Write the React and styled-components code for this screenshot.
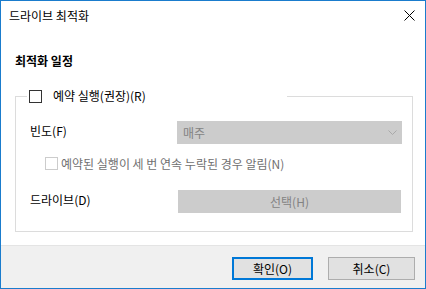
import React from 'react';
import styled, { createGlobalStyle } from 'styled-components';

const GlobalStyle = createGlobalStyle`
  html, body {
    margin: 0;
    padding: 0;
    background: #ffffff;
  }
  body {
    font-family: "Noto Sans CJK KR", "Noto Sans", "Liberation Sans", sans-serif;
    font-size: 12px;
    color: #000000;
  }
`;

const Window = styled.div`
  width: 426px;
  height: 289px;
  box-sizing: border-box;
  border: 1px solid #1a7ccd;
  background: #ffffff;
  display: flex;
  flex-direction: column;
  overflow: hidden;
`;

const TitleBar = styled.div`
  height: 29px;
  display: flex;
  align-items: center;
  justify-content: space-between;
  padding: 0 10px 0 8px;
  font-size: 12px;
  line-height: 16px;
`;

const CloseButton = styled.div`
  width: 12px;
  height: 12px;
  display: flex;
  align-items: center;
  justify-content: center;
`;

const Body = styled.div`
  flex: 1;
  padding: 0 12px 0 14px;
`;

const Heading = styled.div`
  margin-top: 23px;
  font-weight: bold;
  line-height: 16px;
`;

const Group = styled.fieldset`
  margin: 19px 0 0 0;
  padding: 17px 10px 18px 14px;
  border: 1px solid #dcdcdc;
  min-width: 0;
`;

const Legend = styled.legend`
  box-sizing: border-box;
  width: 260px;
  margin-left: -3px;
  padding: 0 2px;
  display: flex;
  align-items: center;
  gap: 11px;
  line-height: 16px;
`;

const Box = styled.span`
  display: inline-block;
  box-sizing: border-box;
  width: 13px;
  height: 13px;
  border: 1px solid ${p => (p.$disabled ? '#cccccc' : '#333333')};
  background: #ffffff;
  flex: none;
`;

const Row = styled.div`
  display: flex;
  align-items: center;
  height: 23px;
  margin-top: ${p => p.$top || 0}px;
`;

const Label = styled.span`
  width: ${p => p.$width}px;
  line-height: 16px;
  margin-top: -3px;
  flex: none;
`;

const Select = styled.div`
  box-sizing: border-box;
  width: 225px;
  height: 23px;
  background: #cccccc;
  color: #838383;
  display: flex;
  align-items: center;
  justify-content: space-between;
  padding: 0 5px 0 6px;
  line-height: 16px;
`;

const CheckRow = styled.div`
  display: flex;
  align-items: center;
  gap: 3px;
  margin: 13px 0 0 15px;
  height: 13px;
  color: #707070;
  line-height: 16px;
`;

const DisabledButton = styled.div`
  width: 223px;
  height: 23px;
  margin-left: 1px;
  background: #cccccc;
  color: #838383;
  display: flex;
  align-items: center;
  justify-content: center;
  line-height: 16px;
`;

const Footer = styled.div`
  height: 43px;
  box-sizing: border-box;
  border-top: 1px solid #e4e4e4;
  background: #f0f0f0;
  display: flex;
  justify-content: flex-end;
  align-items: flex-start;
  gap: 15px;
  padding: 11px 10px 0 0;
`;

const Button = styled.div`
  box-sizing: border-box;
  width: ${p => p.$width}px;
  height: 23px;
  background: #e1e1e1;
  border: ${p => (p.$primary ? '2px solid #0078d7' : '1px solid #adadad')};
  display: flex;
  align-items: center;
  justify-content: center;
  line-height: 16px;
`;

export default function App() {
  return (
    <>
      <GlobalStyle />
      <Window>
        <TitleBar>
          <span>드라이브 최적화</span>
          <CloseButton>
            <svg width="11" height="11" viewBox="0 0 11 11">
              <path d="M0.5 0.5 L10.5 10.5 M10.5 0.5 L0.5 10.5" stroke="#000" strokeWidth="1" fill="none" />
            </svg>
          </CloseButton>
        </TitleBar>
        <Body>
          <Heading>최적화 일정</Heading>
          <Group>
            <Legend>
              <Box />
              <span>예약 실행(권장)(R)</span>
            </Legend>
            <Row>
              <Label $width={147}>빈도(F)</Label>
              <Select>
                <span>매주</span>
                <svg width="9" height="6" viewBox="0 0 9 6">
                  <path d="M0.5 0.5 L4.5 4.5 L8.5 0.5" stroke="#a9a9a9" strokeWidth="1" fill="none" />
                </svg>
              </Select>
            </Row>
            <CheckRow>
              <Box $disabled />
              <span>예약된 실행이 세 번 연속 누락된 경우 알림(N)</span>
            </CheckRow>
            <Row $top={20}>
              <Label $width={147}>드라이브(D)</Label>
              <DisabledButton>선택(H)</DisabledButton>
            </Row>
          </Group>
        </Body>
        <Footer>
          <Button $primary $width={81}>확인(O)</Button>
          <Button $width={87}>취소(C)</Button>
        </Footer>
      </Window>
    </>
  );
}
